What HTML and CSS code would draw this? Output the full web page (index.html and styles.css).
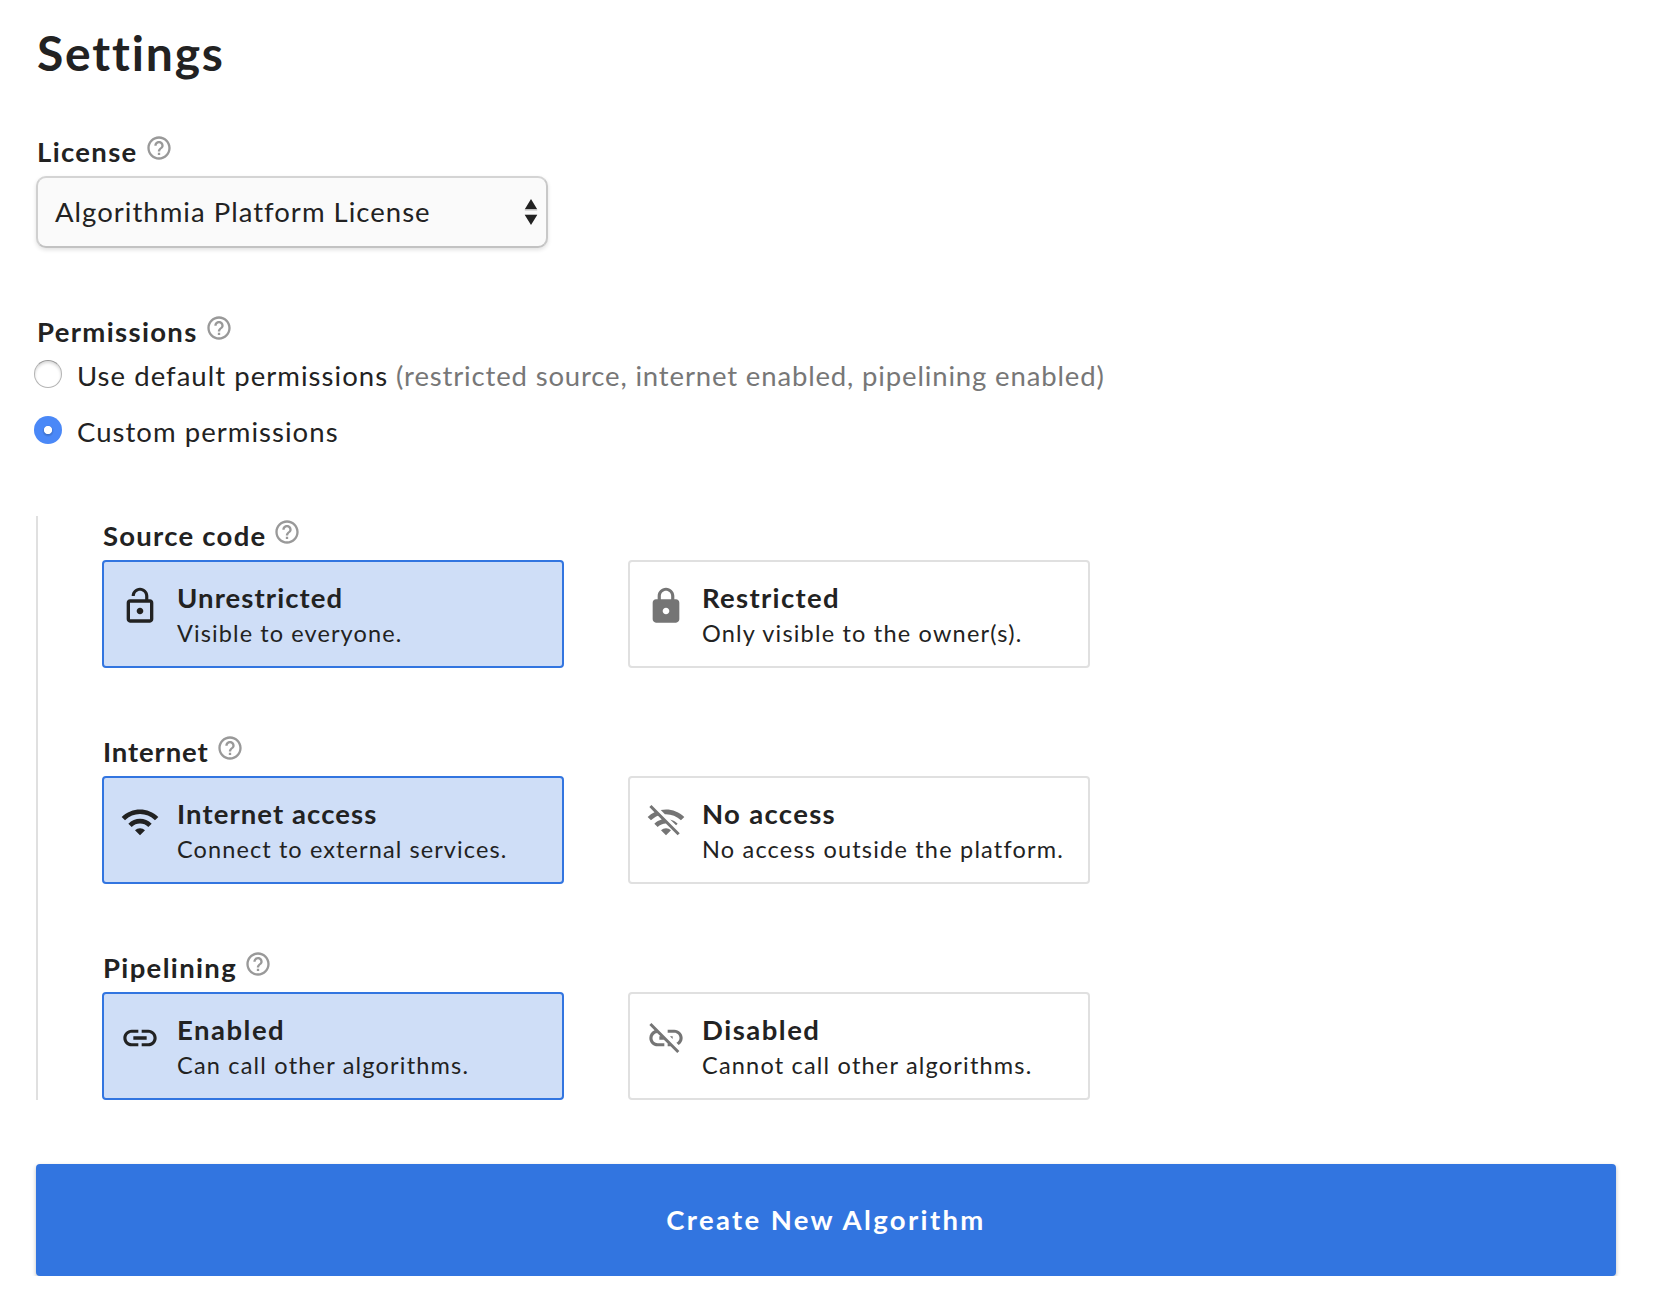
FILE: index.html
```
<!DOCTYPE html>
<html lang="en">
<head>
<meta charset="utf-8">
<title>Settings</title>
<link rel="stylesheet" href="styles.css">
</head>
<body>
<svg class="sprite" width="0" height="0" aria-hidden="true">
  <symbol id="help" viewBox="0 0 24 24"><path d="M11 18h2v-2h-2v2zm1-16C6.48 2 2 6.48 2 12s4.48 10 10 10 10-4.48 10-10S17.52 2 12 2zm0 18c-4.41 0-8-3.59-8-8s3.59-8 8-8 8 3.59 8 8-3.59 8-8 8zm0-14c-2.21 0-4 1.79-4 4h2c0-1.100.9-2 2-2s2 .9 2 2c0 2-3 1.750-3 5h2c0-2.250 3-2.500 3-5 0-2.210-1.790-4-4-4z"/></symbol>
  <symbol id="lock-open" viewBox="0 0 24 24"><path d="M12 17c1.100 0 2-.9 2-2s-.9-2-2-2-2 .9-2 2 .9 2 2 2zm6-9h-1V6c0-2.760-2.240-5-5-5S7 3.240 7 6h1.900c0-1.710 1.390-3.100 3.100-3.100 1.710 0 3.100 1.390 3.100 3.100v2H6c-1.100 0-2 .9-2 2v10c0 1.100.9 2 2 2h12c1.100 0 2-.9 2-2V10c0-1.100-.9-2-2-2zm0 12H6V10h12v10z"/></symbol>
  <symbol id="lock" viewBox="0 0 24 24"><path d="M18 8h-1V6c0-2.760-2.240-5-5-5S7 3.240 7 6v2H6c-1.100 0-2 .9-2 2v10c0 1.100.9 2 2 2h12c1.100 0 2-.9 2-2V10c0-1.100-.9-2-2-2zm-6 9c-1.100 0-2-.9-2-2s.9-2 2-2 2 .9 2 2-.9 2-2 2zm3.100-9H8.900V6c0-1.710 1.390-3.100 3.100-3.100 1.710 0 3.100 1.390 3.100 3.100v2z"/></symbol>
  <symbol id="wifi" viewBox="0 0 24 24"><path d="M1 9l2 2c4.970-4.970 13.030-4.970 18 0l2-2C16.930 2.930 7.080 2.930 1 9zm8 8l3 3 3-3c-1.650-1.660-4.340-1.660-6 0zm-4-4l2 2c2.760-2.760 7.240-2.760 10 0l2-2C15.140 9.140 8.870 9.140 5 13z"/></symbol>
  <symbol id="wifi-off" viewBox="0 0 24 24"><path d="M22.990 9C19.150 5.160 13.800 3.760 8.840 4.780l2.520 2.520c3.470-.17 6.990 1.050 9.630 3.700l2-2zm-4 4c-1.290-1.290-2.840-2.130-4.490-2.560l3.530 3.530.96-.97zM2 3.050L5.070 6.100C3.600 6.820 2.220 7.780 1 9l1.990 2c1.240-1.240 2.670-2.160 4.200-2.770l2.240 2.240C7.810 10.890 6.270 11.730 5 13v.01L6.990 15c1.360-1.360 3.140-2.040 4.920-2.060L18.980 20l1.270-1.260L3.290 1.790 2 3.050zM9 17l3 3 3-3c-1.650-1.660-4.340-1.660-6 0z"/></symbol>
  <symbol id="link" viewBox="0 0 24 24"><path d="M3.900 12c0-1.710 1.390-3.100 3.100-3.100h4V7H7c-2.760 0-5 2.240-5 5s2.240 5 5 5h4v-1.900H7c-1.710 0-3.100-1.390-3.100-3.100zM8 13h8v-2H8v2zm9-6h-4v1.900h4c1.710 0 3.100 1.390 3.100 3.100s-1.390 3.100-3.100 3.100h-4V17h4c2.760 0 5-2.240 5-5s-2.240-5-5-5z"/></symbol>
  <symbol id="link-off" viewBox="0 0 24 24"><path d="M14.390 11L16 12.610V11zM17 7h-4v1.900h4c1.710 0 3.100 1.390 3.100 3.100 0 1.270-.77 2.370-1.870 2.840l1.400 1.400C21.050 15.360 22 13.790 22 12c0-2.760-2.240-5-5-5zM2 4.270l3.110 3.110C3.290 8.120 2 9.910 2 12c0 2.760 2.240 5 5 5h4v-1.900H7c-1.710 0-3.100-1.390-3.100-3.100 0-1.590 1.210-2.900 2.760-3.070L8.730 11H8v2h2.730L13 15.270V17h1.730l4.010 4.010 1.270-1.270L3.270 3 2 4.270z"/></symbol>
</svg>
<main class="settings">
  <h1>Settings</h1>

  <section class="field">
    <div class="label"><span>License</span><svg class="help"><use href="#help"/></svg></div>
    <div class="select">
      <span>Algorithmia Platform License</span>
      <svg class="arrows" viewBox="0 0 14 28"><path d="M7 1l6.200 10.200H.8zM.8 17h12.400L7 27z"/><path class="edge" d="M.8 12h12.400M.8 16.500h12.400"/></svg>
    </div>
  </section>

  <section class="field">
    <div class="label"><span>Permissions</span><svg class="help"><use href="#help"/></svg></div>
    <div class="radios">
      <label class="radio"><i class="dot"></i><span>Use default permissions</span><span class="hint">(restricted source, internet enabled, pipelining enabled)</span></label>
      <label class="radio"><i class="dot checked"></i><span>Custom permissions</span></label>
    </div>
  </section>

  <div class="custom">
    <section class="group">
      <div class="label"><span class="snug">Source code</span><svg class="help"><use href="#help"/></svg></div>
      <div class="cards">
        <div class="card selected"><svg class="icon"><use href="#lock-open"/></svg><div><h3 class="tight">Unrestricted</h3><p>Visible to everyone.</p></div></div>
        <div class="card"><svg class="icon"><use href="#lock"/></svg><div><h3>Restricted</h3><p class="loose">Only visible to the owner(s).</p></div></div>
      </div>
    </section>
    <section class="group">
      <div class="label"><span class="tighter">Internet</span><svg class="help"><use href="#help"/></svg></div>
      <div class="cards">
        <div class="card selected"><svg class="icon"><use href="#wifi"/></svg><div><h3 class="tight">Internet access</h3><p>Connect to external services.</p></div></div>
        <div class="card"><svg class="icon"><use href="#wifi-off"/></svg><div><h3>No access</h3><p class="loose">No access outside the platform.</p></div></div>
      </div>
    </section>
    <section class="group">
      <div class="label"><span>Pipelining</span><svg class="help"><use href="#help"/></svg></div>
      <div class="cards">
        <div class="card selected"><svg class="icon"><use href="#link"/></svg><div><h3 class="wide">Enabled</h3><p class="loose">Can call other algorithms.</p></div></div>
        <div class="card"><svg class="icon"><use href="#link-off"/></svg><div><h3 class="wide">Disabled</h3><p class="loose">Cannot call other algorithms.</p></div></div>
      </div>
    </section>
  </div>

  <button class="create" type="button">Create New Algorithm</button>
</main>
</body>
</html>
```
FILE: styles.css
```
* { box-sizing: border-box; margin: 0; padding: 0; }

body {
  background: #fff;
  color: #222;
  font: 400 27.5px/38px Lato, "Open Sans", sans-serif;
  letter-spacing: 1.08px;
}

.sprite { display: block; }

svg { fill: currentColor; flex: none; }

.settings {
  display: flex;
  flex-direction: column;
  padding: 23px 38px 0 36px;
}

h1 {
  margin-bottom: 49px;
  padding-left: 1px;
  font-size: 48px;
  font-weight: 700;
  line-height: 60px;
  letter-spacing: 1.84px;
}

.field { margin-bottom: 64px; }

.label {
  display: flex;
  gap: 7px;
  height: 38px;
  padding-left: 1px;
  font-weight: 700;
  line-height: 40px;
  letter-spacing: 1.34px;
}

.help {
  width: 28px;
  height: 28px;
  margin-top: 2px;
  color: #999;
}

.snug { letter-spacing: 1.25px; }
.tighter { letter-spacing: .86px; }
.card .tight { letter-spacing: 1.08px; }
.card .wide { letter-spacing: 1.5px; }

.select {
  display: flex;
  align-items: center;
  justify-content: space-between;
  width: 512px;
  height: 72px;
  margin-top: 6px;
  padding: 0 8px 0 17px;
  border: 2px solid;
  border-color: #d4d4d4 #c8c8c8 #c2c2c2 #d0d0d0;
  border-radius: 10px;
  background: #fafafa;
  box-shadow: 0 2px 4px rgba(0, 0, 0, .12);
  letter-spacing: 1.02px;
}

.arrows { width: 14px; height: 28px; }
.edge { fill: none; stroke: #bbb; stroke-width: 1; }

.radios {
  display: flex;
  flex-direction: column;
  gap: 18px;
  margin-top: 6px;
}

.radio {
  display: flex;
  height: 38px;
  margin-left: -2px;
  line-height: 40px;
  letter-spacing: 1.04px;
}

.dot {
  width: 28px;
  height: 28px;
  margin: 4px 15px 0 0;
  border: 1px solid #b4b4b4;
  border-top-color: #999;
  border-radius: 50%;
  background: #fff;
  box-shadow: inset 0 2px 3px rgba(0, 0, 0, .15);
}

.checked {
  border: 0;
  background: radial-gradient(circle, #fff 3.700px, transparent 4.500px), radial-gradient(circle at 50% 54%, #3c70cc 3.500px, #4a88f7 6px);
  box-shadow: none;
}

.hint {
  margin-left: 8px;
  color: #777;
  letter-spacing: .85px;
}

.custom {
  display: flex;
  flex-direction: column;
  gap: 64px;
  margin: 2px 0 64px;
  padding-left: 64px;
  border-left: 2px solid #e0e0e0;
}

.cards {
  display: flex;
  gap: 64px;
  margin-top: 6px;
}

.card {
  display: flex;
  gap: 16px;
  width: 462px;
  height: 108px;
  padding: 17px 16px 15px;
  border: 2px solid #e0e0e0;
  border-radius: 4px;
}

.selected {
  border-color: #3275e0;
  background: #cfdef7;
}

.selected h3, .selected p { padding-left: 1px; }

.card h3 {
  font-size: 27.5px;
  font-weight: 700;
  line-height: 38px;
  letter-spacing: 1.32px;
}

.card p {
  font-size: 23.5px;
  line-height: 32px;
  letter-spacing: 1.1px;
  white-space: nowrap;
}

.card .loose { letter-spacing: 1.2px; }

.icon {
  width: 40px;
  height: 40px;
  margin-top: 7px;
  color: #757575;
}

.selected .icon { color: #222; }

.create {
  height: 112px;
  border: 0;
  border-radius: 4px;
  background: #3275e0;
  box-shadow: 0 2px 4px rgba(0, 0, 0, .26);
  color: #fff;
  font: 700 27.5px/38px Lato, "Open Sans", sans-serif;
  letter-spacing: 2.35px;
}
```
